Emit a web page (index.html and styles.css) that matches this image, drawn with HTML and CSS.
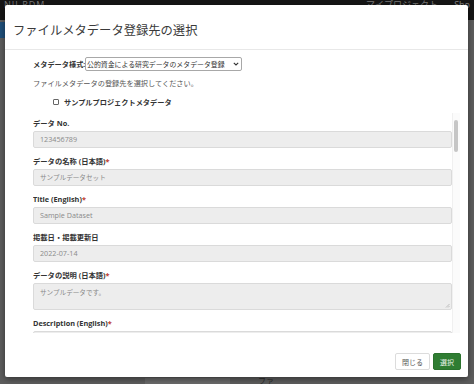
FILE: index.html
```html
<!DOCTYPE html>
<html lang="ja">
<head>
<meta charset="utf-8">
<title>ファイルメタデータ登録先の選択</title>
<link rel="stylesheet" href="styles.css">
</head>
<body>
<div class="page">
  <div class="navbar">
    <span class="brand">NII RDM</span>
    <span class="nav-right">マイプロジェクト</span>
    <span class="nav-user">Sho</span>
  </div>
  <div class="page-main">
    <div class="side-tab"></div>
    <div class="page-bottom"><span class="bottom-box"></span><span class="bottom-text">ファ</span></div>
  </div>
</div>

<div class="modal">
  <div class="modal-header">
    <h4 class="modal-title">ファイルメタデータ登録先の選択</h4>
  </div>
  <div class="modal-body">
    <div class="schema-row">
      <span class="schema-label">メタデータ様式:</span>
      <div class="select">
        <span class="select-text">公的資金による研究データのメタデータ登録</span>
        <svg class="chevron" width="6" height="4" viewBox="0 0 6 4"><path d="M0.8 0.8 L3 3 L5.2 0.8" fill="none" stroke="#333" stroke-width="1.1"/></svg>
      </div>
    </div>
    <p class="hint">ファイルメタデータの登録先を選択してください。</p>
    <label class="check-row"><span class="checkbox"></span><span class="check-label">サンプルプロジェクトメタデータ</span></label>
    <div class="scroll-box">
      <div class="scroll-content">
        <div class="field">
          <div class="field-label">データ No.</div>
          <div class="input latin">123456789</div>
        </div>
        <div class="field">
          <div class="field-label">データの名称 (日本語)<span class="req">*</span></div>
          <div class="input">サンプルデータセット</div>
        </div>
        <div class="field">
          <div class="field-label">Title (English)<span class="req">*</span></div>
          <div class="input latin">Sample Dataset</div>
        </div>
        <div class="field">
          <div class="field-label">掲載日・掲載更新日</div>
          <div class="input latin">2022-07-14</div>
        </div>
        <div class="field">
          <div class="field-label">データの説明 (日本語)<span class="req">*</span></div>
          <div class="input textarea">サンプルデータです。
            <svg class="grip" width="5" height="5" viewBox="0 0 5 5"><path d="M4.5 1 L1 4.5 M4.5 3 L3 4.5" stroke="#aaa" stroke-width="0.7"/></svg>
          </div>
        </div>
        <div class="field">
          <div class="field-label">Description (English)<span class="req">*</span></div>
          <div class="input textarea"></div>
        </div>
      </div>
      <div class="scrollbar"><div class="thumb"></div></div>
    </div>
  </div>
  <div class="modal-footer">
    <button class="btn btn-default">閉じる</button>
    <button class="btn btn-success">選択</button>
  </div>
</div>
</body>
</html>
```
FILE: styles.css
```css
* { box-sizing: border-box; }
html, body { margin: 0; padding: 0; }
body {
  width: 474px;
  height: 384px;
  overflow: hidden;
  background: #5d5d5d;
  font-family: "Open Sans", "Noto Sans CJK JP", sans-serif;
  position: relative;
}
.page { height: 384px; display: flex; flex-direction: column; }
.navbar {
  height: 20px;
  background: #161616;
  display: flex;
  align-items: flex-start;
  padding: 0 4px;
  color: #7a7a7a;
  font-size: 9px;
  line-height: 9px;
}
.brand { letter-spacing: 1px; }
.nav-right { margin-left: auto; margin-right: 16px; }
.nav-user { color: #888; }
.page-main { flex: 1; display: flex; flex-direction: column; position: relative; }
.side-tab { width: 10px; height: 16px; background: #1f4f7a; margin-top: 2px; }
.page-bottom { margin-top: auto; height: 8px; display: flex; align-items: flex-end; padding-left: 145px; }
.bottom-box { width: 85px; height: 6px; background: #6a6a6a; }
.bottom-text { margin-left: 28px; font-size: 8px; line-height: 6px; color: #2a2a2a; overflow: hidden; height: 6px; }

.modal {
  position: absolute;
  left: 5px;
  top: 5px;
  width: 463px;
  height: 372px;
  background: #fff;
  border-radius: 2px;
  box-shadow: 0 2px 6px rgba(0,0,0,0.45);
  display: flex;
  flex-direction: column;
}
.modal-header {
  height: 45px;
  border-bottom: 1px solid #e8e8e8;
  padding: 18px 8px 0;
}
.modal-title {
  margin: 0;
  font-size: 12.3px;
  line-height: 16px;
  font-weight: normal;
  color: #3a3a3a;
}
.modal-body {
  flex: 1;
  padding: 7px 8px 0 28px;
  display: flex;
  flex-direction: column;
}
.schema-row { display: flex; align-items: center; height: 14px; }
.schema-label { font-size: 7.2px; font-weight: bold; color: #333; white-space: nowrap; flex: none; width: 52px; }
.select {
  width: 157px;
  flex: none;
  height: 14px;
  border: 1px solid #a8a8a8;
  border-radius: 2px;
  display: flex;
  align-items: center;
  padding: 0 2px 0 1px;
}
.select-text { font-size: 6.9px; color: #333; white-space: nowrap; overflow: hidden; flex: 1; min-width: 0; }
.chevron { flex: none; margin-left: 1px; }
.hint {
  margin: 7px 0 0;
  font-size: 7.2px;
  line-height: 10px;
  color: #555;
}
.check-row {
  margin: 9px 0 0 20px;
  height: 10px;
  display: flex;
  align-items: center;
}
.checkbox {
  width: 6px;
  height: 6px;
  border: 1px solid #666;
  border-radius: 1px;
  background: #fff;
}
.check-label { margin-left: 5px; font-size: 7.2px; font-weight: bold; color: #333; }
.scroll-box {
  margin-top: 6px;
  height: 220px;
  display: flex;
}
.scroll-content {
  flex: 1;
  overflow: hidden;
  padding-top: 5px;
}
.field { margin-bottom: 8px; }
.field-label {
  font-size: 7.3px;
  line-height: 10px;
  height: 10px;
  font-weight: bold;
  color: #333;
  margin-bottom: 3px;
  white-space: nowrap;
}
.req { color: #c0392b; }
.input {
  height: 17px;
  background: #ededed;
  border: 1px solid #dadada;
  border-radius: 2px;
  padding: 0 6px;
  font-size: 6.6px;
  line-height: 15px;
  color: #8a8a8a;
  white-space: nowrap;
}
.input.latin { font-size: 7.2px; }
.textarea { height: 27px; position: relative; padding-top: 1px; }
.grip { position: absolute; right: 1px; bottom: 1px; }
.scrollbar {
  width: 8px;
  background: #fbfbfb;
  border-left: 1px solid #f0f0f0;
  padding-top: 7px;
}
.thumb {
  width: 4px;
  height: 32px;
  margin-left: 1px;
  background: #c6c6c6;
  border-radius: 2px;
}
.modal-footer {
  height: 32px;
  padding: 8px 7px 7px;
  display: flex;
  justify-content: flex-end;
  gap: 3px;
}
.btn {
  height: 17px;
  font-family: "Open Sans", "Noto Sans CJK JP", sans-serif;
  font-size: 7px;
  border-radius: 2px;
  padding: 0;
  margin: 0;
}
.btn-default { width: 35px; background: #fff; border: 1px solid #dcdcdc; color: #555; }
.btn-success { width: 28px; background: #2f7d32; border: 1px solid #2a722d; color: #e6f0e6; }
```
